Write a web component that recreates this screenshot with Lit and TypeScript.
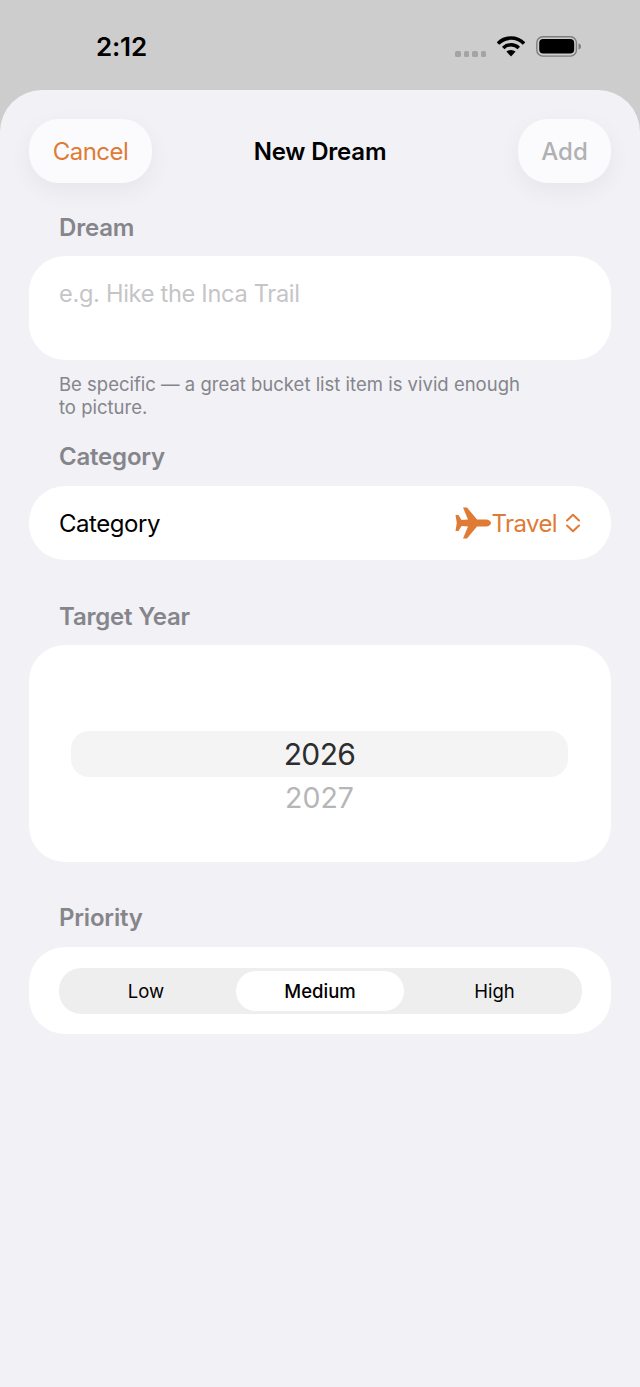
import { LitElement, html, css } from "lit";
import { customElement } from "lit/decorators.js";

@customElement("app-root")
export class AppRoot extends LitElement {
  static styles = css`
    :host {
      display: block;
      width: 640px;
      height: 1387px;
      overflow: hidden;
      background: #cdcdcd;
      font-family: Inter, "Liberation Sans", sans-serif;
      color: #000;
    }
    .status {
      height: 90px;
      box-sizing: border-box;
      padding: 0 58px 0 96px;
      display: flex;
      justify-content: space-between;
      align-items: flex-start;
    }
    .time {
      margin-top: 32px;
      font-size: 26px;
      line-height: 30px;
      font-weight: 600;
      letter-spacing: -0.2px;
    }
    .status-icons {
      margin-top: 36px;
      display: flex;
      align-items: flex-start;
    }
    .dots {
      display: flex;
      gap: 3px;
      margin: 15px 11px 0 0;
    }
    .dots i {
      width: 5.5px;
      height: 5.5px;
      border-radius: 1.5px;
      background: #a4a4a4;
    }
    .wifi {
      display: block;
      margin-right: 11px;
    }
    .battery {
      display: block;
    }
    .sheet {
      height: 1297px;
      box-sizing: border-box;
      background: #f1f1f6;
      border-radius: 42px 42px 0 0;
      padding: 29px 29px 0;
    }
    .nav {
      display: flex;
      justify-content: space-between;
      align-items: center;
      position: relative;
      height: 64px;
    }
    .nav-btn {
      height: 64px;
      box-sizing: border-box;
      border-radius: 30px;
      background: #fbfbfe;
      box-shadow: 0 8px 24px rgba(0, 0, 0, 0.05);
      display: flex;
      align-items: center;
      justify-content: center;
      font-size: 24px;
    }
    .cancel {
      width: 123px;
      color: #df7b35;
      letter-spacing: -0.5px;
    }
    .add {
      width: 93px;
      color: #b1b1b4;
      font-weight: 500;
    }
    .title {
      position: absolute;
      left: 0;
      right: 0;
      text-align: center;
      font-size: 24px;
      font-weight: 600;
      letter-spacing: -0.2px;
    }
    .label {
      padding-left: 30px;
      color: #85858b;
      font-size: 24px;
      line-height: 30px;
      font-weight: 600;
      letter-spacing: -0.2px;
    }
    .label-dream {
      margin-top: 30px;
    }
    .label-category {
      margin-top: 23px;
    }
    .label-year {
      margin-top: 42px;
    }
    .label-priority {
      margin-top: 41px;
    }
    .card {
      background: #fff;
      border-radius: 36px;
      margin-top: 14px;
    }
    .card.input {
      margin-top: 13px;
    }
    .input {
      height: 104px;
      box-sizing: border-box;
      padding: 23px 30px 0;
      font-size: 23.6px;
      line-height: 30px;
      letter-spacing: -0.3px;
      color: #c5c5c8;
    }
    .hint {
      margin-top: 13px;
      padding: 0 30px;
      width: 480px;
      font-size: 18.5px;
      line-height: 23px;
      color: #85858b;
    }
    .row {
      height: 74px;
      box-sizing: border-box;
      padding: 0 30px;
      display: flex;
      align-items: center;
      justify-content: space-between;
      font-size: 24px;
      letter-spacing: -0.45px;
    }
    .value {
      display: flex;
      align-items: center;
      color: #df7b35;
      letter-spacing: -0.6px;
    }
    .value svg {
      display: block;
    }
    .chevrons {
      margin-left: 8px;
    }
    .card.picker {
      margin-top: 13px;
      height: 217px;
      box-sizing: border-box;
      padding: 86px 43px 0 42px;
      display: flex;
      flex-direction: column;
      align-items: stretch;
    }
    .picked {
      height: 46px;
      border-radius: 18px;
      background: #f4f4f5;
      display: flex;
      align-items: center;
      justify-content: center;
      font-size: 30px;
      letter-spacing: -0.6px;
      color: #2d2d2f;
    }
    .next {
      text-align: center;
      margin-top: 4px;
      font-size: 28.5px;
      line-height: 34px;
      color: #b6b6b8;
    }
    .card.priority {
      height: 87px;
      box-sizing: border-box;
      padding: 21px 29px 0 30px;
      margin-top: 14px;
    }
    .segments {
      height: 46px;
      box-sizing: border-box;
      padding: 3px 0;
      border-radius: 22px;
      background: #eeeeef;
      display: grid;
      grid-template-columns: 174px 174px 1fr;
      font-size: 18.5px;
    }
    .segments div {
      display: flex;
      align-items: center;
      justify-content: center;
    }
    .segments .on {
      margin: 0 3px;
      border-radius: 20px;
      background: #fff;
      font-weight: 500;
    }
  `;

  render() {
    return html`
      <div class="status">
        <div class="time">2:12</div>
        <div class="status-icons">
          <div class="dots"><i></i><i></i><i></i><i></i></div>
          <svg class="wifi" width="28" height="21" viewBox="0 0 28 21">
            <path d="M1 7.6 A18 18 0 0 1 27 7.6" fill="none" stroke="#000" stroke-width="3.6" />
            <path d="M6.2 12 A11 11 0 0 1 21.8 12" fill="none" stroke="#000" stroke-width="3.4" />
            <path d="M14 20.6 L9.4 15.6 A7 7 0 0 1 18.6 15.6 Z" fill="#000" />
          </svg>
          <svg class="battery" width="46" height="21" viewBox="0 0 46 21">
            <rect x="0.8" y="0.7" width="39.6" height="19.4" rx="6" fill="none" stroke="#7d7d7d" stroke-width="1.4" />
            <rect x="3.2" y="3" width="35" height="14.5" rx="4" fill="#000" />
            <path d="M42.5 7.5 C44.5 8 45 9.5 45 10.5 C45 11.5 44.5 13 42.5 13.5 Z" fill="#7d7d7d" />
          </svg>
        </div>
      </div>
      <div class="sheet">
        <div class="nav">
          <div class="nav-btn cancel">Cancel</div>
          <div class="title">New Dream</div>
          <div class="nav-btn add">Add</div>
        </div>

        <div class="label label-dream">Dream</div>
        <div class="card input">e.g. Hike the Inca Trail</div>
        <div class="hint">Be specific — a great bucket list item is vivid enough to picture.</div>

        <div class="label label-category">Category</div>
        <div class="card row">
          <span>Category</span>
          <span class="value">
            <svg width="36" height="32" viewBox="0 0 36 32">
              <path
                fill="#df7b35"
                d="M8 0.5 L12 0.5 L22 12.5 L31 12.5 C34 12.5 36 14.5 36 16 C36 17.5 34 19.5 31 19.5 L22 19.5 L12 31.5 L8 31.5 L13 19.5 L6.5 19 L3.5 24 L0.5 24 L1.8 16 L0.5 8 L3.5 8 L6.5 13 L13 12.5 Z"
              />
            </svg>
            Travel
            <svg class="chevrons" width="16" height="20" viewBox="0 0 16 20">
              <path d="M2 7.5 L8 1.8 L14 7.5 M2 12.5 L8 18.2 L14 12.5" fill="none" stroke="#df7b35" stroke-width="2" stroke-linecap="round" stroke-linejoin="round" />
            </svg>
          </span>
        </div>

        <div class="label label-year">Target Year</div>
        <div class="card picker">
          <div class="picked">2026</div>
          <div class="next">2027</div>
        </div>

        <div class="label label-priority">Priority</div>
        <div class="card priority">
          <div class="segments">
            <div>Low</div>
            <div class="on">Medium</div>
            <div>High</div>
          </div>
        </div>
      </div>
    `;
  }
}
